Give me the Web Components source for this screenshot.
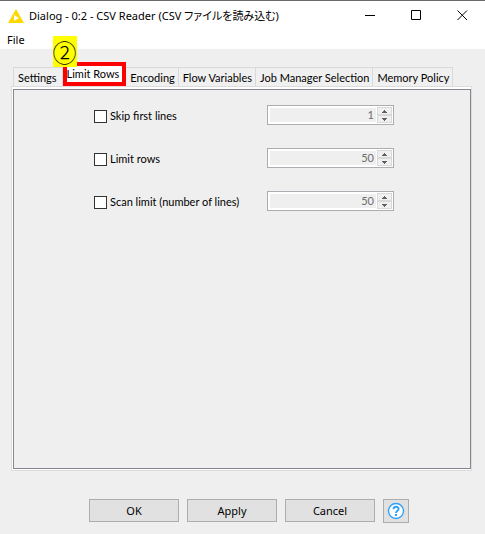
<!DOCTYPE html>
<html lang="ja">
<head>
<meta charset="utf-8">
<title>Dialog - 0:2 - CSV Reader</title>
<style>
    body {
        margin: 0;
        background: #efefef;
        color: #000;
        font: 11px/16px Lato, "Noto Sans CJK JP", sans-serif;
        --system-font: 11px/16px "Noto Sans", "Noto Sans CJK JP", sans-serif;
    }
</style>
</head>
<body>
<knime-dialog>
    <title-bar slot="title">Dialog - 0:2 - CSV Reader (CSV ファイルを読み込む)</title-bar>
    <menu-bar slot="menu">File</menu-bar>
    <tab-strip slot="tabs">
        <tab-item>Settings</tab-item>
        <tab-item selected marker="②">Limit Rows</tab-item>
        <tab-item>Encoding</tab-item>
        <tab-item>Flow Variables</tab-item>
        <tab-item>Job Manager Selection</tab-item>
        <tab-item>Memory Policy</tab-item>
    </tab-strip>
    <limit-row label="Skip first lines" value="1"></limit-row>
    <limit-row label="Limit rows" value="50"></limit-row>
    <limit-row label="Scan limit (number of lines)" value="50"></limit-row>
    <dialog-button slot="footer">OK</dialog-button>
    <dialog-button slot="footer">Apply</dialog-button>
    <dialog-button slot="footer">Cancel</dialog-button>
    <help-button slot="footer"></help-button>
</knime-dialog>

<script>
class KnimeDialog extends HTMLElement {
    constructor() {
        super();
        this.attachShadow({ mode: 'open' });
        this.shadowRoot.innerHTML = `
            <style>
                :host {
                    display: flex;
                    flex-direction: column;
                    box-sizing: border-box;
                    min-height: 100vh;
                    border-top: 1px solid #6b6b6b;
                }

                main {
                    flex: 1;
                    display: flex;
                    flex-direction: column;
                    padding: 13px 13px 0 11px;
                }

                .pane {
                    flex: 1;
                    display: flex;
                    border: 1px solid #dcdcdc;
                    background: #fff;
                    padding: 2px 0 1px 1px;
                }

                .content {
                    flex: 1;
                    display: flex;
                    flex-direction: column;
                    align-items: center;
                    gap: 23px;
                    border: 1px solid #828790;
                    background: #efefef;
                    padding: 15px 0 15px 4px;
                }

                footer {
                    display: flex;
                    justify-content: center;
                    align-items: flex-start;
                    gap: 8px;
                    padding: 28px 0 11px 13px;
                }
            </style>
            <slot name="title"></slot>
            <slot name="menu"></slot>
            <main>
                <slot name="tabs"></slot>
                <div class="pane"><div class="content"><slot></slot></div></div>
            </main>
            <footer><slot name="footer"></slot></footer>
        `;
    }
}

class TitleBar extends HTMLElement {
    constructor() {
        super();
        this.attachShadow({ mode: 'open' });
        this.shadowRoot.innerHTML = `
            <style>
                :host {
                    display: flex;
                    align-items: center;
                    height: 29px;
                    padding-left: 8px;
                    background: #fff;
                    font: var(--system-font);
                    font-feature-settings: "palt";
                }

                .title {
                    flex: 1;
                    margin-left: 5px;
                    white-space: nowrap;
                }

                button {
                    width: 46px;
                    height: 29px;
                    padding: 0;
                    border: 0;
                    background: none;
                }

                svg {
                    display: block;
                    margin: 0 auto;
                }
            </style>
            <svg width="16" height="14" viewBox="0 0 16 14">
                <path d="M8 0 L16 14 H0 Z" fill="#ffd800"/>
                <path d="M6 6 L11 9 L6 12 Z" fill="#fff"/>
            </svg>
            <span class="title"><slot></slot></span>
            <button aria-label="Minimize"><svg width="11" height="11"><path d="M0 5.5H10" stroke="#000"/></svg></button>
            <button aria-label="Maximize"><svg width="11" height="11"><path d="M.5.5h9v9h-9z" fill="none" stroke="#000"/></svg></button>
            <button aria-label="Close"><svg width="11" height="11"><path d="M.5.5l9.5 9.5M10 .5L.5 10" stroke="#000"/></svg></button>
        `;
    }
}

class MenuBar extends HTMLElement {
    constructor() {
        super();
        this.attachShadow({ mode: 'open' });
        this.shadowRoot.innerHTML = `
            <style>
                :host {
                    display: flex;
                    height: 19px;
                    background: #fff;
                }

                button {
                    padding: 1px 7px 0;
                    border: 0;
                    background: none;
                    color: inherit;
                    font: var(--system-font);
                }
            </style>
            <button><slot></slot></button>
        `;
    }
}

class TabStrip extends HTMLElement {
    constructor() {
        super();
        this.attachShadow({ mode: 'open' });
        this.shadowRoot.innerHTML = `
            <style>
                :host {
                    display: flex;
                    align-items: flex-end;
                    padding-left: 2px;
                }
            </style>
            <slot></slot>
        `;
        this.setAttribute('role', 'tablist');
    }
}

class TabItem extends HTMLElement {
    connectedCallback() {
        if (this.shadowRoot) return;
        this.attachShadow({ mode: 'open' });
        const marker = this.getAttribute('marker');
        this.shadowRoot.innerHTML = `
            <style>
                :host {
                    display: block;
                    position: relative;
                }

                button {
                    display: block;
                    height: 19px;
                    padding: 1px 3px 0 4px;
                    border: 1px solid #d9d9d9;
                    border-width: 1px 1px 0 0;
                    background: #f0f0f0;
                    color: inherit;
                    font: inherit;
                    white-space: nowrap;
                }

                :host(:first-child) button {
                    padding: 1px 5px 0 4px;
                    border-left-width: 1px;
                }

                :host([selected]) button {
                    height: 24px;
                    padding: 0 3px 0 0;
                    border: 4px solid #f00;
                    background: #fff;
                }

                /* step number over the highlighted tab */
                .marker {
                    position: absolute;
                    left: -10px;
                    top: -26px;
                    width: 24px;
                    background: #ff0;
                    font: 300 24px/31px "Noto Sans CJK JP", sans-serif;
                    text-align: center;
                }
            </style>
            <button role="tab" aria-selected="${this.hasAttribute('selected')}"><slot></slot></button>
            ${marker ? `<span class="marker">${marker}</span>` : ''}
        `;
    }
}

class LimitRow extends HTMLElement {
    connectedCallback() {
        if (this.shadowRoot) return;
        this.attachShadow({ mode: 'open' });
        const label = this.getAttribute('label') || '';
        const value = this.getAttribute('value') || '0';
        this.shadowRoot.innerHTML = `
            <style>
                :host {
                    display: grid;
                    grid-template-columns: 173px 127px;
                    align-items: center;
                }

                label {
                    display: flex;
                    align-items: center;
                    gap: 3px;
                    padding-top: 2px;
                    white-space: nowrap;
                }

                .check {
                    appearance: none;
                    box-sizing: border-box;
                    width: 13px;
                    height: 13px;
                    margin: 0;
                    border: 1px solid #333;
                    background: #fff;
                }

                .check:checked {
                    background: #333;
                    box-shadow: inset 0 0 0 2px #fff;
                }

                .spinner {
                    display: flex;
                    box-sizing: border-box;
                    height: 20px;
                    border: 1px solid #abadb3;
                    background: #fff;
                    padding: 1px 1px 1px 2px;
                }

                .value {
                    appearance: textfield;
                    flex: 1;
                    min-width: 0;
                    margin: 1px 0;
                    padding: 0 2px 0 0;
                    border: 0;
                    background: #efefef;
                    color: #6d6d6d;
                    font: inherit;
                    text-align: right;
                }

                .value::-webkit-inner-spin-button {
                    appearance: none;
                    margin: 0;
                }

                .arrows {
                    display: flex;
                    flex-direction: column;
                    width: 15px;
                    margin-left: 1px;
                }

                .arrows button {
                    display: flex;
                    flex: 1;
                    align-items: center;
                    justify-content: center;
                    padding: 0;
                    border: 1px solid #d9d9d9;
                    background: #f0f0f0;
                }

                .arrows svg {
                    display: block;
                }
            </style>
            <label><input class="check" type="checkbox">${label}</label>
            <div class="spinner">
                <input class="value" type="number" aria-label="${label}" value="${value}" disabled>
                <div class="arrows">
                    <button aria-label="Increase" disabled><svg width="5" height="3"><path d="M2 0h1v1h1v1h1v1H0V2h1V1h1z" fill="#606060"/></svg></button>
                    <button aria-label="Decrease" disabled><svg width="5" height="3"><path d="M0 0h5v1H4v1H3v1H2V2H1V1H0z" fill="#606060"/></svg></button>
                </div>
            </div>
        `;
        // value can be edited only while the option is ticked
        this.shadowRoot.querySelector('.check').addEventListener('change', (e) => {
            this.shadowRoot.querySelectorAll('.spinner input, .spinner button').forEach((el) => {
                el.disabled = !e.target.checked;
            });
        });
        const input = this.shadowRoot.querySelector('.value');
        const [up, down] = this.shadowRoot.querySelectorAll('.arrows button');
        up.addEventListener('click', () => input.stepUp());
        down.addEventListener('click', () => input.stepDown());
    }
}

class DialogButton extends HTMLElement {
    constructor() {
        super();
        this.attachShadow({ mode: 'open' });
        this.shadowRoot.innerHTML = `
            <style>
                :host {
                    display: block;
                }

                button {
                    display: block;
                    width: 90px;
                    height: 23px;
                    padding: 0;
                    border: 1px solid #adadad;
                    background: #e1e1e1;
                    color: inherit;
                    font: var(--system-font);
                }
            </style>
            <button><slot></slot></button>
        `;
    }
}

class HelpButton extends HTMLElement {
    constructor() {
        super();
        this.attachShadow({ mode: 'open' });
        this.shadowRoot.innerHTML = `
            <style>
                :host {
                    display: block;
                }

                button {
                    display: block;
                    width: 26px;
                    height: 24px;
                    padding: 0;
                    border: 1px solid #adadad;
                    background: #e1e1e1;
                }

                svg {
                    display: block;
                    margin: 0 auto;
                }
            </style>
            <button aria-label="Help">
                <svg width="18" height="18" viewBox="0 0 18 18" fill="none" stroke="#2fa0f5">
                    <circle cx="9" cy="9" r="7.5" fill="#fff" stroke-width="1.4"/>
                    <path d="M6.5 7.2C6.5 4 11.6 4 11.6 7C11.6 8.8 9 8.8 9 11" stroke-width="1.9"/>
                    <path d="M9 12v2" stroke-width="2"/>
                </svg>
            </button>
        `;
    }
}

customElements.define('knime-dialog', KnimeDialog);
customElements.define('title-bar', TitleBar);
customElements.define('menu-bar', MenuBar);
customElements.define('tab-strip', TabStrip);
customElements.define('tab-item', TabItem);
customElements.define('limit-row', LimitRow);
customElements.define('dialog-button', DialogButton);
customElements.define('help-button', HelpButton);
</script>
</body>
</html>
